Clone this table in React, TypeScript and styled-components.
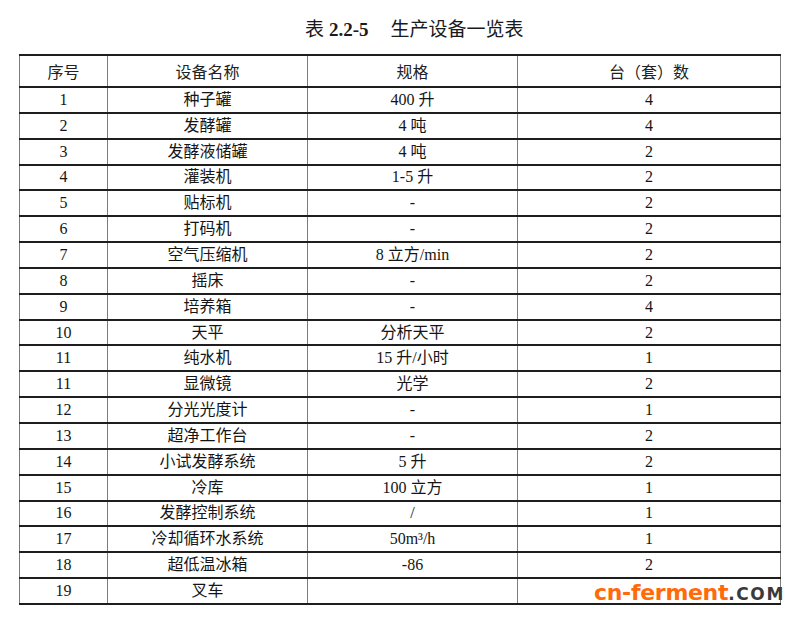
import React from "react";
import styled, { createGlobalStyle } from "styled-components";

const Global = createGlobalStyle`
  html, body { margin: 0; padding: 0; background: #ffffff; }
  body { font-family: "Liberation Serif", "Noto Sans CJK SC", serif; color: #111; }
`;

const Page = styled.div`
  position: relative;
  width: 800px;
  height: 618px;
  padding: 17px 0 0 19px;
  box-sizing: border-box;
`;

const Title = styled.div`
  display: flex;
  align-items: baseline;
  padding-left: 286px;
  height: 28px;
  font-size: 19px;
  line-height: 26px;
  color: #1a1a1a;
  margin-bottom: 9px;
`;

const TitleNo = styled.span`
  font-weight: bold;
  margin-left: 5px;
  margin-right: 22px;
`;

const Table = styled.table`
  border-collapse: collapse;
  table-layout: fixed;
  width: 761px;
  font-size: 16px;
`;

const Col = styled.col<{ $w: number }>`
  width: ${(p) => p.$w}px;
`;

const HeadCell = styled.th`
  height: 30px;
  padding: 0;
  font-weight: normal;
  text-align: center;
  vertical-align: middle;
  border-top: 2px solid #1e1e1e;
  border-bottom: 2px solid #1e1e1e;
  border-left: 1.5px solid #7d7d7d;
  border-right: 1.5px solid #7d7d7d;
  font-size: 16px;
  color: #222;
`;

const Cell = styled.td`
  height: 23.85px;
  padding: 0;
  text-align: center;
  vertical-align: middle;
  border-bottom: 2px solid #1e1e1e;
  border-left: 1.5px solid #7d7d7d;
  border-right: 1.5px solid #7d7d7d;
  line-height: 18px;
  color: #151515;
  white-space: nowrap;
`;

const Watermark = styled.div`
  position: absolute;
  left: 594px;
  top: 580px;
  display: flex;
  align-items: baseline;
  font-family: "DejaVu Sans", sans-serif;
  font-weight: bold;
  line-height: 26px;
`;

const Brand = styled.span`
  color: #ff6a0a;
  font-size: 22px;
  letter-spacing: -0.3px;
`;

const Dot = styled.span`
  color: #3a3a3a;
  font-size: 17px;
  letter-spacing: 1.6px;
`;

const rows: [string, string, string, string][] = [
  ["1", "种子罐", "400 升", "4"],
  ["2", "发酵罐", "4 吨", "4"],
  ["3", "发酵液储罐", "4 吨", "2"],
  ["4", "灌装机", "1-5 升", "2"],
  ["5", "贴标机", "-", "2"],
  ["6", "打码机", "-", "2"],
  ["7", "空气压缩机", "8 立方/min", "2"],
  ["8", "摇床", "-", "2"],
  ["9", "培养箱", "-", "4"],
  ["10", "天平", "分析天平", "2"],
  ["11", "纯水机", "15 升/小时", "1"],
  ["11", "显微镜", "光学", "2"],
  ["12", "分光光度计", "-", "1"],
  ["13", "超净工作台", "-", "2"],
  ["14", "小试发酵系统", "5 升", "2"],
  ["15", "冷库", "100 立方", "1"],
  ["16", "发酵控制系统", "/", "1"],
  ["17", "冷却循环水系统", "50m³/h", "1"],
  ["18", "超低温冰箱", "-86", "2"],
  ["19", "叉车", "", ""],
];

export default function App() {
  return (
    <Page>
      <Global />
      <Title>
        <span>表</span>
        <TitleNo>2.2-5</TitleNo>
        <span>生产设备一览表</span>
      </Title>
      <Table>
        <colgroup>
          <Col $w={88} />
          <Col $w={200} />
          <Col $w={210} />
          <Col $w={263} />
        </colgroup>
        <thead>
          <tr>
            <HeadCell>序号</HeadCell>
            <HeadCell>设备名称</HeadCell>
            <HeadCell>规格</HeadCell>
            <HeadCell>台（套）数</HeadCell>
          </tr>
        </thead>
        <tbody>
          {rows.map((r, i) => (
            <tr key={i}>
              {r.map((c, j) => (
                <Cell key={j}>{c}</Cell>
              ))}
            </tr>
          ))}
        </tbody>
      </Table>
      <Watermark>
        <Brand>cn-ferment</Brand>
        <Dot>.COM</Dot>
      </Watermark>
    </Page>
  );
}
